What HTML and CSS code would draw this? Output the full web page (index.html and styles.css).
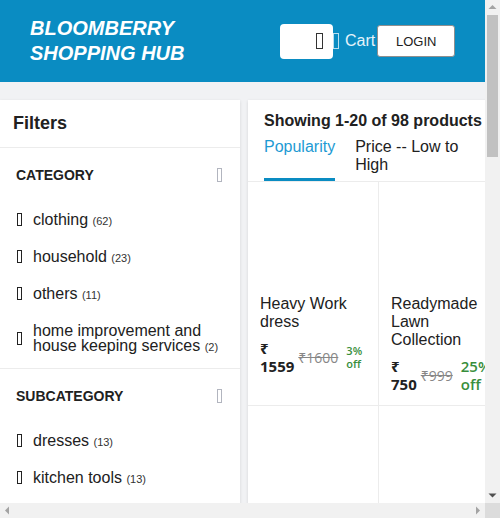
FILE: index.html
```html
<!DOCTYPE html>
<html lang="en">
<head>
<meta charset="utf-8">
<title>Bloomberry Shopping Hub</title>
<link rel="stylesheet" href="styles.css">
</head>
<body>
<header class="topbar">
  <div class="brand">BLOOMBERRY<br>SHOPPING HUB</div>
  <div class="search"><span class="tofu tofu-search"></span></div>
  <div class="cart"><span class="tofu tofu-cart"></span>Cart</div>
  <button class="login" type="button">LOGIN</button>
</header>
<main class="layout">
  <aside class="filters">
    <div class="filters-title">Filters</div>
    <section class="fsec">
      <div class="fsec-head"><span>CATEGORY</span><span class="tofu tofu-toggle"></span></div>
      <ul class="flist">
        <li><span class="tofu tofu-check"></span><span class="flabel">clothing <small>(62)</small></span></li>
        <li><span class="tofu tofu-check"></span><span class="flabel">household <small>(23)</small></span></li>
        <li><span class="tofu tofu-check"></span><span class="flabel">others <small>(11)</small></span></li>
        <li><span class="tofu tofu-check"></span><span class="flabel">home improvement and house keeping services <small>(2)</small></span></li>
      </ul>
    </section>
    <section class="fsec">
      <div class="fsec-head"><span>SUBCATEGORY</span><span class="tofu tofu-toggle"></span></div>
      <ul class="flist">
        <li><span class="tofu tofu-check"></span><span class="flabel">dresses <small>(13)</small></span></li>
        <li><span class="tofu tofu-check"></span><span class="flabel">kitchen tools <small>(13)</small></span></li>
      </ul>
    </section>
  </aside>
  <section class="products">
    <div class="phead">
      <div class="pcount">Showing 1-20 of 98 products</div>
      <div class="tabs">
        <div class="tab active">Popularity</div>
        <div class="tab">Price -- Low to High</div>
      </div>
    </div>
    <div class="grid">
      <div class="cell">
        <div class="pimg"></div>
        <div class="pname">Heavy Work dress</div>
        <div class="prices">
          <span class="now">₹ 1559</span>
          <span class="was">₹1600</span>
          <span class="off">3% off</span>
        </div>
      </div>
      <div class="cell">
        <div class="pimg"></div>
        <div class="pname">Readymade Lawn Collection</div>
        <div class="prices">
          <span class="now">₹ 750</span>
          <span class="was">₹999</span>
          <span class="off big">25% off</span>
        </div>
      </div>
      <div class="cell empty"></div>
      <div class="cell empty"></div>
      <div class="cell empty"></div>
      <div class="cell empty"></div>
      <div class="cell empty"></div>
      <div class="cell empty"></div>
      <div class="cell empty"></div>
      <div class="cell empty"></div>
      <div class="cell empty"></div>
      <div class="cell empty"></div>
    </div>
  </section>
</main>

<div class="vscroll" aria-hidden="true">
  <div class="sb-btn"><svg width="15" height="15" viewBox="0 0 15 15"><path d="M3.5 9 L7.5 5 L11.5 9 Z" fill="#a3a3a3"/></svg></div>
  <div class="vthumb"></div>
  <div class="sb-fill"></div>
  <div class="sb-btn"><svg width="15" height="15" viewBox="0 0 15 15"><path d="M3.5 5.5 L11.5 5.5 L7.5 9.5 Z" fill="#505050"/></svg></div>
</div>
<div class="hscroll" aria-hidden="true">
  <div class="sb-btn"><svg width="15" height="15" viewBox="0 0 15 15"><path d="M9 3.5 L9 11.5 L5 7.5 Z" fill="#a3a3a3"/></svg></div>
  <div class="sb-fill"></div>
  <div class="sb-btn"><svg width="15" height="15" viewBox="0 0 15 15"><path d="M6 3.5 L6 11.5 L10 7.5 Z" fill="#a3a3a3"/></svg></div>
</div>
<div class="sb-corner" aria-hidden="true"></div>
</body>
</html>
```
FILE: styles.css
```css
* { box-sizing: border-box; }
html, body { margin: 0; padding: 0; }
body {
  background: #f1f2f4;
  font-family: "Liberation Sans", Arial, sans-serif;
  color: #212121;
}
.topbar {
  height: 82px;
  background: #0a8cc2;
  display: flex;
  align-items: center;
  padding-left: 30px;
}
.brand {
  flex: none;
  width: 250px;
  color: #fff;
  font-weight: bold;
  font-style: italic;
  font-size: 20px;
  line-height: 25px;
}
.search {
  flex: none;
  width: 53px;
  height: 35px;
  background: #fff;
  border-radius: 4px;
  display: flex;
  align-items: center;
  justify-content: flex-end;
  padding-right: 10px;
}
.tofu {
  display: inline-block;
  border: 1px solid currentColor;
  flex: none;
}
.tofu-search { width: 7px; height: 16px; color: #333; border-width: 1.5px; }
.cart {
  flex: none;
  display: flex;
  align-items: center;
  color: #e4f3fa;
  font-size: 16px;
  line-height: 18px;
}
.tofu-cart { width: 6px; height: 16px; color: #b7def0; margin-right: 6px; }
.login {
  flex: none;
  margin-left: 2px;
  width: 78px;
  height: 32px;
  background: #fff;
  border: 1px solid #8f8f8f;
  border-radius: 3px;
  font-family: "Liberation Sans", Arial, sans-serif;
  font-size: 13px;
  color: #212121;
  padding: 0;
}
.layout {
  display: flex;
  align-items: flex-start;
  gap: 8px;
  width: 510px;
  padding: 18px 0 120px;
}
.filters {
  flex: none;
  width: 240px;
  min-height: 1000px;
  background: #fff;
  box-shadow: 0 1px 3px rgba(0,0,0,0.12);
}
.filters-title {
  font-size: 18px;
  font-weight: bold;
  line-height: 22px;
  padding: 12px 13px 13px;
  border-bottom: 1px solid #ececec;
}
.fsec {
  padding: 17px 0 4px;
  border-bottom: 1px solid #ececec;
}
.fsec:last-child { border-bottom: none; }
.fsec-head {
  display: flex;
  align-items: center;
  justify-content: space-between;
  padding: 0 18px 0 16px;
  height: 20px;
  font-size: 14px;
  font-weight: bold;
}
.tofu-toggle { width: 5px; height: 14px; color: #b2b5bf; }
.flist {
  list-style: none;
  margin: 16px 0 0;
  padding: 0;
}
.flist li {
  display: flex;
  align-items: center;
  padding: 11px 10px 11px 17px;
  font-size: 16px;
  line-height: 15px;
}
.tofu-check { width: 5px; height: 13px; color: #222; margin-right: 11px; }
.flabel small { font-size: 11px; line-height: 1; color: #333; }
.products {
  flex: none;
  width: 262px;
  background: #fff;
  box-shadow: 0 1px 3px rgba(0,0,0,0.12);
}
.phead {
  padding: 12px 0 0 16px;
  border-bottom: 1px solid #ececec;
}
.pcount {
  font-size: 16px;
  font-weight: bold;
  line-height: 18px;
  white-space: nowrap;
}
.tabs {
  display: flex;
  gap: 20px;
  margin-top: 8px;
}
.tab {
  font-size: 16px;
  line-height: 18px;
  padding-bottom: 4px;
  border-bottom: 3px solid transparent;
  max-width: 120px;
}
.tab.active {
  color: #1d9ad3;
  border-bottom-color: #0a8cc2;
}
.grid {
  display: grid;
  grid-template-columns: 131px 131px;
}
.cell {
  padding: 12px;
  border-right: 1px solid #ececec;
  border-bottom: 1px solid #ececec;
}
.cell.empty { height: 225px; }
.pimg { height: 101px; }
.pname {
  font-size: 16px;
  line-height: 18px;
  color: #212121;
}
.prices {
  display: flex;
  align-items: center;
  margin-top: 8px;
  font-family: "Open Sans", "Noto Sans", "DejaVu Sans", sans-serif;
}
.now {
  width: min-content;
  font-weight: 700;
  font-size: 15px;
  line-height: 18px;
  color: #212121;
}
.was {
  margin-left: 4px;
  font-size: 14px;
  color: #878787;
  text-decoration: line-through;
}
.off {
  margin-left: 8px;
  width: min-content;
  font-weight: 600;
  font-size: 11px;
  line-height: 13px;
  color: #388e3c;
}
.off.big { font-size: 15px; line-height: 18px; }

/* scrollbar overlay (window chrome) */
.vscroll {
  position: fixed;
  top: 0;
  right: 0;
  width: 15px;
  bottom: 15px;
  background: #f1f1f1;
  display: flex;
  flex-direction: column;
  z-index: 10;
}
.hscroll {
  position: fixed;
  left: 0;
  right: 15px;
  bottom: 0;
  height: 15px;
  background: #f1f1f1;
  display: flex;
  z-index: 10;
}
.sb-corner {
  position: fixed;
  right: 0;
  bottom: 0;
  width: 15px;
  height: 15px;
  background: #dcdcdc;
  z-index: 10;
}
.sb-btn { flex: none; width: 15px; height: 15px; }
.sb-btn svg { display: block; }
.sb-fill { flex: 1; }
.vthumb {
  flex: none;
  height: 142px;
  margin: 0 2px;
  background: #c1c1c1;
}
```
